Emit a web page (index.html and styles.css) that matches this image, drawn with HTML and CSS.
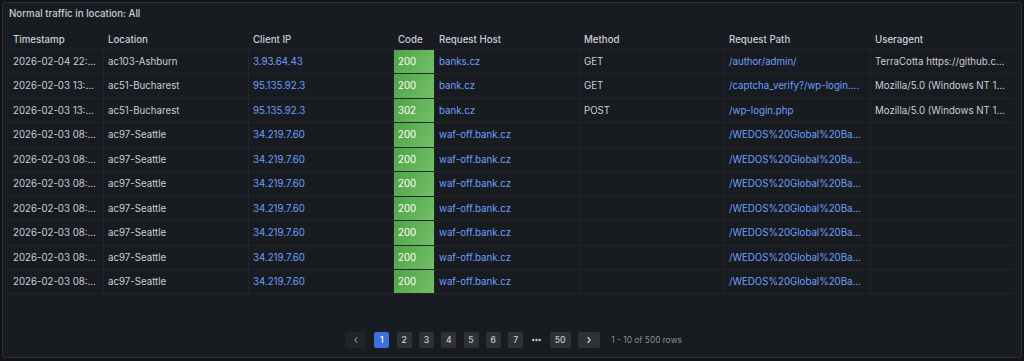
FILE: index.html
```html
<!DOCTYPE html>
<html>
<head>
<meta charset="utf-8">
<link rel="stylesheet" href="styles.css">
</head>
<body>
<div class="panel">
  <div class="title">Normal traffic in location: All</div>
  <div class="table">
    <div class="row head">
      <div class="cell">Timestamp</div>
      <div class="cell">Location</div>
      <div class="cell">Client IP</div>
      <div class="cell">Code</div>
      <div class="cell">Request Host</div>
      <div class="cell">Method</div>
      <div class="cell">Request Path</div>
      <div class="cell">Useragent</div>
    </div>
    <div class="row">
      <div class="cell">2026-02-04 22:47:12</div>
      <div class="cell">ac103-Ashburn</div>
      <div class="cell link">3.93.64.43</div>
      <div class="cell code">200</div>
      <div class="cell link">banks.cz</div>
      <div class="cell">GET</div>
      <div class="cell link">/author/admin/</div>
      <div class="cell">TerraCotta https://github.com/cisagov/terracotta</div>
    </div>
    <div class="row">
      <div class="cell">2026-02-03 13:21:08</div>
      <div class="cell">ac51-Bucharest</div>
      <div class="cell link">95.135.92.3</div>
      <div class="cell code">200</div>
      <div class="cell link">bank.cz</div>
      <div class="cell">GET</div>
      <div class="cell link">/captcha_verify?/wp-login.php</div>
      <div class="cell">Mozilla/5.0 (Windows NT 10.0; Win64; x64)</div>
    </div>
    <div class="row">
      <div class="cell">2026-02-03 13:21:05</div>
      <div class="cell">ac51-Bucharest</div>
      <div class="cell link">95.135.92.3</div>
      <div class="cell code">302</div>
      <div class="cell link">bank.cz</div>
      <div class="cell">POST</div>
      <div class="cell link">/wp-login.php</div>
      <div class="cell">Mozilla/5.0 (Windows NT 10.0; Win64; x64)</div>
    </div>
    <div class="row">
      <div class="cell">2026-02-03 08:14:51</div>
      <div class="cell">ac97-Seattle</div>
      <div class="cell link">34.219.7.60</div>
      <div class="cell code">200</div>
      <div class="cell link">waf-off.bank.cz</div>
      <div class="cell"></div>
      <div class="cell link">/WEDOS%20Global%20Backbone%20Test</div>
      <div class="cell"></div>
    </div>
    <div class="row">
      <div class="cell">2026-02-03 08:14:50</div>
      <div class="cell">ac97-Seattle</div>
      <div class="cell link">34.219.7.60</div>
      <div class="cell code">200</div>
      <div class="cell link">waf-off.bank.cz</div>
      <div class="cell"></div>
      <div class="cell link">/WEDOS%20Global%20Backbone%20Test</div>
      <div class="cell"></div>
    </div>
    <div class="row">
      <div class="cell">2026-02-03 08:14:49</div>
      <div class="cell">ac97-Seattle</div>
      <div class="cell link">34.219.7.60</div>
      <div class="cell code">200</div>
      <div class="cell link">waf-off.bank.cz</div>
      <div class="cell"></div>
      <div class="cell link">/WEDOS%20Global%20Backbone%20Test</div>
      <div class="cell"></div>
    </div>
    <div class="row">
      <div class="cell">2026-02-03 08:14:48</div>
      <div class="cell">ac97-Seattle</div>
      <div class="cell link">34.219.7.60</div>
      <div class="cell code">200</div>
      <div class="cell link">waf-off.bank.cz</div>
      <div class="cell"></div>
      <div class="cell link">/WEDOS%20Global%20Backbone%20Test</div>
      <div class="cell"></div>
    </div>
    <div class="row">
      <div class="cell">2026-02-03 08:14:47</div>
      <div class="cell">ac97-Seattle</div>
      <div class="cell link">34.219.7.60</div>
      <div class="cell code">200</div>
      <div class="cell link">waf-off.bank.cz</div>
      <div class="cell"></div>
      <div class="cell link">/WEDOS%20Global%20Backbone%20Test</div>
      <div class="cell"></div>
    </div>
    <div class="row">
      <div class="cell">2026-02-03 08:14:46</div>
      <div class="cell">ac97-Seattle</div>
      <div class="cell link">34.219.7.60</div>
      <div class="cell code">200</div>
      <div class="cell link">waf-off.bank.cz</div>
      <div class="cell"></div>
      <div class="cell link">/WEDOS%20Global%20Backbone%20Test</div>
      <div class="cell"></div>
    </div>
    <div class="row">
      <div class="cell">2026-02-03 08:14:45</div>
      <div class="cell">ac97-Seattle</div>
      <div class="cell link">34.219.7.60</div>
      <div class="cell code">200</div>
      <div class="cell link">waf-off.bank.cz</div>
      <div class="cell"></div>
      <div class="cell link">/WEDOS%20Global%20Backbone%20Test</div>
      <div class="cell"></div>
    </div>
  </div>
  <div class="pager">
    <span class="pbtn arrow disabled"><svg width="6" height="8" viewBox="0 0 6 8"><path d="M4 1.5 L1.8 4 L4 6.5" fill="none" stroke="currentColor" stroke-width="1.2" stroke-linecap="round" stroke-linejoin="round"/></svg></span>
    <span class="pbtn active">1</span>
    <span class="pbtn">2</span>
    <span class="pbtn">3</span>
    <span class="pbtn">4</span>
    <span class="pbtn">5</span>
    <span class="pbtn">6</span>
    <span class="pbtn">7</span>
    <span class="dots"><svg width="9" height="4" viewBox="0 0 9 4"><circle cx="1.3" cy="2" r="1.2" fill="currentColor"/><circle cx="4.5" cy="2" r="1.2" fill="currentColor"/><circle cx="7.7" cy="2" r="1.2" fill="currentColor"/></svg></span>
    <span class="pbtn wide">50</span>
    <span class="pbtn arrow next"><svg width="6" height="8" viewBox="0 0 6 8"><path d="M2 1.5 L4.2 4 L2 6.5" fill="none" stroke="currentColor" stroke-width="1.2" stroke-linecap="round" stroke-linejoin="round"/></svg></span>
    <span class="summary">1 - 10 of 500 rows</span>
  </div>
</div>
</body>
</html>
```

FILE: styles.css
```css
html, body {
  margin: 0;
  padding: 0;
  background: #111217;
}
body {
  font-family: Inter, "Noto Sans", "Liberation Sans", sans-serif;
  color: #ccccdc;
  font-size: 9.7px;
}
.panel {
  box-sizing: border-box;
  margin: 2px;
  width: 1020px;
  height: 356px;
  background: #181b1f;
  border: 1px solid rgba(204, 204, 220, 0.12);
  border-radius: 2px;
  display: flex;
  flex-direction: column;
}
.title {
  height: 24px;
  line-height: 22px;
  padding-left: 6px;
  font-weight: 500;
  flex: none;
}
.table {
  margin-left: 5px;
  width: 1006px;
  flex: none;
}
.row {
  display: grid;
  grid-template-columns: 95px 145px 145px 41px 145px 145px 146px 144px;
  height: 24.45px;
  box-sizing: border-box;
  border-bottom: 1px solid rgba(204, 204, 220, 0.06);
}
.row.head {
  height: 23px;
  padding-top: 3px;
  font-weight: 500;
}
.cell {
  display: block;
  padding: 0 5px 0 4px;
  border-left: 1px solid rgba(204, 204, 220, 0.06);
  overflow: hidden;
  white-space: nowrap;
  text-overflow: ellipsis;
  min-width: 0;
  line-height: 23.45px;
}
.cell:first-child {
  border-left-color: transparent;
}
.head .cell {
  border-left-color: transparent;
  line-height: 20px;
}
.link {
  color: #6e9fff;
}
.code {
  background: linear-gradient(120deg, #4fa445, #73bf69);
  background-clip: padding-box;
  color: #ffffff;
}
.pager {
  margin-top: auto;
  margin-bottom: 9px;
  display: flex;
  justify-content: center;
  align-items: center;
  gap: 7.3px;
  padding-left: 3px;
  font-size: 8.6px;
}
.pbtn {
  height: 16px;
  min-width: 15px;
  box-sizing: border-box;
  padding: 0 4px;
  display: flex;
  align-items: center;
  justify-content: center;
  background: #2f3137;
  border-radius: 2px;
  font-weight: 500;
  color: #ccccdc;
}
.pbtn.wide {
  min-width: 21px;
}
.pbtn.arrow {
  width: 21px;
}
.pbtn.next {
  width: 22px;
}
.pbtn.disabled {
  background: #212328;
  color: #6e6f78;
  margin-right: 1px;
}
.pbtn.active {
  background: #3d71d9;
  color: #ffffff;
}
.dots {
  display: flex;
  align-items: center;
  color: #ccccdc;
  padding: 0 1.5px;
}
.summary {
  margin-left: 4px;
  font-size: 8.4px;
  color: rgba(204, 204, 220, 0.65);
}
```
